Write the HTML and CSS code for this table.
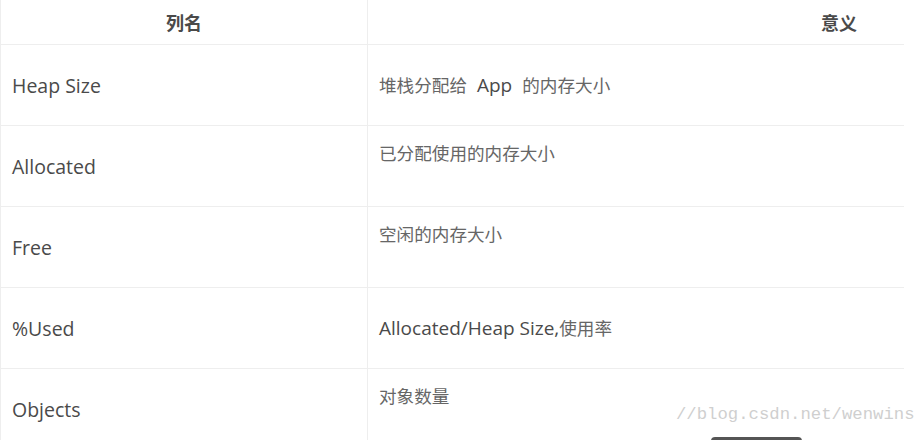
FILE: index.html
```html
<!DOCTYPE html>
<html lang="zh-CN">
<head>
  <meta charset="UTF-8">
  <meta name="viewport" content="width=device-width, initial-scale=1.0">
  <title>Heap 列说明</title>
  <link rel="stylesheet" href="styles.css">
</head>
<body>
  <div class="shot">
    <table class="heap-table">
      <colgroup>
        <col class="col-name">
        <col class="col-desc">
      </colgroup>
      <thead>
        <tr>
          <th>列名</th>
          <th>意义</th>
        </tr>
      </thead>
      <tbody>
        <tr>
          <td>Heap Size</td>
          <td>堆栈分配给<span class="en spaced">App</span>的内存大小</td>
        </tr>
        <tr>
          <td>Allocated</td>
          <td class="extra-line">已分配使用的内存大小</td>
        </tr>
        <tr>
          <td>Free</td>
          <td class="extra-line">空闲的内存大小</td>
        </tr>
        <tr>
          <td>%Used</td>
          <td><span class="en">Allocated/Heap Size,</span>使用率</td>
        </tr>
        <tr>
          <td>Objects</td>
          <td class="extra-line">对象数量</td>
        </tr>
      </tbody>
    </table>
    <div class="bottom-bar"></div>
  </div>

  <!-- watermark sits over the capture, not clipped by the table box -->
  <div class="watermark">//blog.csdn.net/wenwins</div>
</body>
</html>
```

FILE: styles.css
```css
body {
  position: relative;
  margin: 0;
  padding: 0;
  height: 440px;
  overflow: hidden;
  background-color: #fff;
  font-family: "Open Sans", "Noto Sans CJK SC", sans-serif;
}

.shot {
  position: relative;
  width: 904px;
  height: 440px;
  overflow: hidden;
}

.heap-table {
  width: 1311px;
  border-collapse: collapse;
  table-layout: fixed;
}

.col-name {
  width: 367px;
}

.heap-table th,
.heap-table td {
  border: 1px solid #eeeeee;
  padding: 0 11px;
  line-height: 27px;
  vertical-align: middle;
}

.heap-table th {
  height: 44px;
  font-family: "Noto Sans CJK SC", sans-serif;
  font-size: 18px;
  font-weight: bold;
  color: #4a4a4a;
  text-align: center;
  border-top: none;
}

.heap-table td {
  height: 80px;
  font-size: 19.5px;
  color: #4a4a4a;
}

.heap-table td + td {
  font-family: "Noto Sans CJK SC", sans-serif;
  font-size: 17.6px;
  color: #666;
}

.heap-table td.extra-line {
  padding-bottom: 27px;
  height: 53px;
}

.en {
  font-family: "Open Sans", sans-serif;
  font-size: 19px;
  color: #4a4a4a;
}

.en.spaced {
  margin: 0 10px;
}

.watermark {
  position: absolute;
  left: 676px;
  top: 405px;
  font-family: "Liberation Mono", monospace;
  font-size: 17.3px;
  color: #cfcfcf;
  white-space: nowrap;
}

.bottom-bar {
  position: absolute;
  left: 711px;
  top: 437px;
  width: 91px;
  height: 8px;
  background-color: #555;
  border-radius: 4px 4px 0 0;
}
```
